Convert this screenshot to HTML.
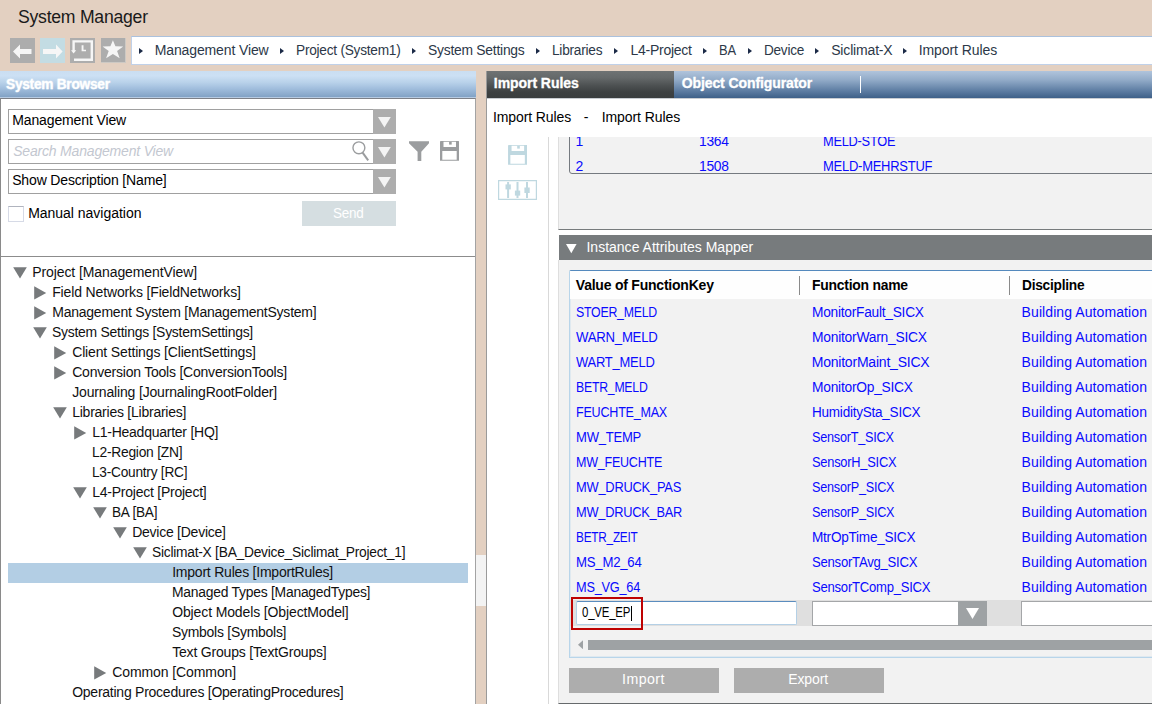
<!DOCTYPE html>
<html lang="en">
<head>
<meta charset="utf-8">
<title>System Manager</title>
<style>
html,body{margin:0;padding:0;background:#e3d0c1;}
body{width:1152px;height:704px;overflow:hidden;font-family:"Liberation Sans",sans-serif;}
#app{position:relative;width:1152px;height:704px;overflow:hidden;background:#e3d0c1;}
#app div,#app i,#app svg,#app span,#app .g{position:absolute;box-sizing:border-box;display:block;}
#app .g{left:0;top:0;width:0;height:0;margin:0;padding:0;list-style:none;}
.t{white-space:pre;line-height:20px;font-family:"Liberation Sans",sans-serif;}
.tb{top:38px;width:25px;height:25px;background:#adadad;}
.bc{left:131px;top:36px;width:1030px;height:29px;background:#fff;border:1px solid #c0d1e9;border-top-color:#abc1dd;}
.ar{top:10.6px;width:0;height:0;border-left:4.6px solid #1b2a47;border-top:3.8px solid transparent;border-bottom:3.8px solid transparent;}
.lh{left:0;top:71px;width:476px;height:27px;background:linear-gradient(#cadef2 0%,#cce0f4 18%,#b9d2ea 42%,#a1bedd 65%,#83a3c6 95%,#83a3c6 96.3%,#b7cbe2 96.4%,#b7cbe2 100%);}
.lp{left:0;top:98px;width:476px;height:606px;background:#fff;border-left:1px solid #8a8a8a;border-right:1px solid #a3a3a3;border-top:1px solid #7d8087;}
.cb{left:8px;width:388px;height:25px;background:#fff;border:1px solid #a0a0a0;}
.dd{right:-1px;top:-1px;width:23px;height:25px;background:#adadad;}
.chk{left:8px;top:206px;width:16px;height:16px;background:#fff;border:1px solid #d6dae6;border-top-color:#b0b4be;}
.send{left:302px;top:201px;width:94px;height:25px;background:#d5dee1;}
.sep{left:1px;top:256px;width:474px;height:1px;background:#8c8c8c;}
.sel{left:8px;top:563px;width:460px;height:20px;background:#b3cee4;}
.grip{left:476px;top:555px;width:10px;height:51px;background:#f3f3f3;}
.rp{left:486px;top:71px;width:670px;height:640px;background:#fff;border-left:1px solid #9a9a9a;}
.tab1{left:487px;top:71px;width:187px;height:27px;background:linear-gradient(#6f7374 0%,#65696a 25%,#4c5051 55%,#3d4142 78%,#3a3e3f 100%);}
.tab2{left:674px;top:71px;width:480px;height:27px;background:linear-gradient(#b0c4dc 0%,#92abc8 33%,#6483a8 68%,#3e6088 100%);}
.tabsep{left:860px;top:75.5px;width:1px;height:17px;background:#fff;}
.hline{left:487px;top:98px;width:670px;height:1px;background:#c9cdd2;}
.vline{left:548px;top:137px;width:1px;height:570px;background:#d9d9d9;}
.g1{left:558px;top:137px;width:600px;height:93px;background:#f2f2f2;border-left:1px solid #dedede;border-bottom:1px solid #777b7d;}
.upclip{left:558px;top:137px;width:600px;height:40px;overflow:hidden;}
.uptab{left:11px;top:-20px;width:600px;height:57px;border:1px solid #757a80;border-radius:0 0 0 3px;}
.sec{left:559px;top:235px;width:600px;height:25px;background:#777b7d;}
.g2{left:558px;top:260px;width:600px;height:444px;background:#f2f2f2;border-left:1px solid #dedede;border-bottom:1px solid #666a6c;}
.lv{left:569px;top:270px;width:600px;height:388px;border:1px solid #b8d5ea;border-top-color:#5489bd;background:#f2f2f2;border-radius:2px 0 0 0;box-shadow:inset 1px -1px 0 rgba(178,211,234,.3);}
.lvh{left:570px;top:271px;width:590px;height:28px;background:#fefefe;}
.csep{top:276px;width:1px;height:19px;background:#8a8a8a;}
.band{left:570px;top:600px;width:590px;height:26px;background:#dfdfdf;}
.in1{left:576px;top:601px;width:221px;height:24px;background:#fff;border:1px solid #b4d0e6;border-top-color:#5a8cbe;border-radius:2px;}
.cb2{left:812px;top:601px;width:175px;height:25px;background:#fff;border:1px solid #a4a6a8;}
.dd2{right:-1px;top:-1px;width:29px;height:25px;background:#9ea2a4;}
.in3{left:1021px;top:601px;width:140px;height:25px;background:#fff;border:1px solid #a4a6a8;}
.red{left:571px;top:597px;width:72px;height:33px;border:2px solid #be0202;}
.caret{left:631px;top:606px;width:1px;height:15px;background:#000;}
.thumb{left:588px;top:640px;width:570px;height:10px;background:#9ea2a4;}
.btn{top:668px;width:150px;height:25px;background:#adadad;}
</style>
</head>
<body>
<div id="app">
<header class="g">
<span class="t" id="t0" style="left:18.20px;top:6px;line-height:21px;font-size:18.3px;color:#1a1a1a;letter-spacing:-0.250px;transform:scaleX(0.9634);transform-origin:0 0;">System Manager</span>
<div class="tb" style="left:10px"><svg width="25" height="25" viewBox="0 0 25 25"><path d="M3 13.5L10 6.6V11H21.5V16H10V20.4Z" fill="#f6f6f6"/></svg></div>
<div class="tb" style="left:40px;background:#c3dce3"><svg width="25" height="25" viewBox="0 0 25 25"><path d="M22.6 13.5L16 6.6V11H3V16H16V20.4Z" fill="#f6f6f6"/></svg></div>
<div class="tb" style="left:70px"><svg width="25" height="25" viewBox="0 0 25 25"><g fill="none" stroke="#f6f6f6" stroke-width="2.4"><path d="M3.6 13V3.4H21.8V21.7H4"/></g><path d="M1 12.2H6.2L3.6 15.4Z" fill="#f6f6f6"/><path d="M11.6 7.2H13.5V11.8H16V13.3H11.6Z" fill="#f6f6f6"/></svg></div>
<div class="tb" style="left:101px;width:25px;height:25px;border-right:1px solid #cdc9c4;border-bottom:1px solid #cdc9c4"><svg width="24" height="24" viewBox="0 0 24 24"><path d="M11.9 2.2L14.4 8.3L22.2 8.5L16.1 13.1L18.7 20.2L11.9 16L5.1 20.2L7.7 13.1L1.6 8.5L9.4 8.3Z" fill="#f6f6f6"/></svg></div>
</header>
<nav class="g">
<div class="bc">
<i class="ar" style="left:6.50px"></i>
<i class="ar" style="left:147.75px"></i>
<i class="ar" style="left:280.00px"></i>
<i class="ar" style="left:403.50px"></i>
<i class="ar" style="left:481.75px"></i>
<i class="ar" style="left:571.00px"></i>
<i class="ar" style="left:615.50px"></i>
<i class="ar" style="left:683.00px"></i>
<i class="ar" style="left:771.00px"></i>
</div>
<span class="t" id="t1" style="left:154.70px;top:42px;line-height:16px;font-size:14px;color:#2c3848;letter-spacing:-0.122px;">Management View</span>
<span class="t" id="t2" style="left:295.95px;top:42px;line-height:16px;font-size:14px;color:#2c3848;letter-spacing:-0.250px;transform:scaleX(0.9767);transform-origin:0 0;">Project (System1)</span>
<span class="t" id="t3" style="left:427.95px;top:42px;line-height:16px;font-size:14px;color:#2c3848;letter-spacing:-0.250px;transform:scaleX(0.9907);transform-origin:0 0;">System Settings</span>
<span class="t" id="t4" style="left:552.20px;top:42px;line-height:16px;font-size:14px;color:#2c3848;letter-spacing:-0.250px;transform:scaleX(0.9767);transform-origin:0 0;">Libraries</span>
<span class="t" id="t5" style="left:630.45px;top:42px;line-height:16px;font-size:14px;color:#2c3848;letter-spacing:-0.250px;">L4-Project</span>
<span class="t" id="t6" style="left:719.20px;top:42px;line-height:16px;font-size:14px;color:#2c3848;letter-spacing:-0.250px;transform:scaleX(0.9220);transform-origin:0 0;">BA</span>
<span class="t" id="t7" style="left:763.70px;top:42px;line-height:16px;font-size:14px;color:#2c3848;letter-spacing:-0.250px;transform:scaleX(0.9688);transform-origin:0 0;">Device</span>
<span class="t" id="t8" style="left:831.20px;top:42px;line-height:16px;font-size:14px;color:#2c3848;letter-spacing:-0.168px;">Siclimat-X</span>
<span class="t" id="t9" style="left:918.70px;top:42px;line-height:16px;font-size:14px;color:#2c3848;letter-spacing:-0.078px;">Import Rules</span>
</nav>
<aside class="g">
<div class="lh"></div>
<div class="lp"></div>
<div class="cb" style="top:109px"><div class="dd"><svg style="left:4.8px;top:8.3px" width="13" height="11" viewBox="0 0 13 11"><path d="M0 0H12.8L6.4 10.6Z" fill="#f4f4f4"/></svg></div></div>
<div class="cb" style="top:139px"><div class="dd"><svg style="left:4.8px;top:8.3px" width="13" height="11" viewBox="0 0 13 11"><path d="M0 0H12.8L6.4 10.6Z" fill="#f4f4f4"/></svg></div><svg style="left:342px;top:1px" width="24" height="22" viewBox="0 0 24 22"><circle cx="7.9" cy="6.8" r="5.95" fill="none" stroke="#9b9d9f" stroke-width="1.4"/><path d="M11.6 11.6L17.2 19.4" stroke="#9b9d9f" stroke-width="2" fill="none"/></svg></div>
<div class="cb" style="top:169px"><div class="dd"><svg style="left:4.8px;top:8.3px" width="13" height="11" viewBox="0 0 13 11"><path d="M0 0H12.8L6.4 10.6Z" fill="#f4f4f4"/></svg></div></div>
<svg style="left:409.1px;top:141.2px" width="20" height="20" viewBox="0 0 20 20"><path d="M0 0.2H20V2.2L12.3 10.8V19.9H8.6V10.8L0 2.2Z" fill="#9b9d9f"/></svg>
<svg style="left:439.6px;top:141.2px" width="19.2" height="19.7" viewBox="0 0 19.2 19.7"><g fill="#9b9d9f"><path d="M0 0.8Q0 0 0.8 0H18.3Q19.2 0 19.2 0.8V19.7H0Z M3.5 0.8V6H16V0.8Z M2.3 10V18.7H16.7V10Z" fill-rule="evenodd"/><rect x="9.1" y="0.8" width="2.6" height="2.8"/></g></svg>
<div class="chk"></div>
<div class="send"></div>
<div class="sep"></div>
<span class="t" id="t10" style="left:5.70px;top:76px;line-height:16px;font-size:14px;color:#fff;font-weight:bold;letter-spacing:-0.250px;transform:scaleX(0.9768);transform-origin:0 0;-webkit-text-stroke:0.3px #fff;text-shadow:0 0 2px rgba(255,255,255,.5);">System Browser</span>
<span class="t" id="t11" style="left:12.20px;top:112px;line-height:16px;font-size:14px;color:#000;letter-spacing:-0.122px;">Management View</span>
<span class="t" id="t12" style="left:13.20px;top:143px;line-height:16px;font-size:14px;color:#c3c7d0;font-style:italic;letter-spacing:-0.188px;">Search Management View</span>
<span class="t" id="t13" style="left:12.20px;top:172px;line-height:16px;font-size:14px;color:#000;letter-spacing:-0.157px;">Show Description [Name]</span>
<span class="t" id="t14" style="left:28.20px;top:205px;line-height:16px;font-size:14px;color:#000;letter-spacing:-0.024px;">Manual navigation</span>
<span class="t" id="t15" style="left:332.95px;top:205px;line-height:16px;font-size:14px;color:#fff;letter-spacing:-0.250px;transform:scaleX(0.9623);transform-origin:0 0;">Send</span>
<div class="sel"></div>
<ul class="g">
<li class="g">
<svg class="tri" style="left:12.5px;top:267.0px" width="14" height="12" viewBox="0 0 14 12"><path d="M0.2 0.3H13.8L7 11.6Z" fill="#777a7c"/></svg>
<span class="t" id="t16" style="left:32.20px;top:264px;line-height:16px;font-size:14px;color:#111;letter-spacing:-0.090px;">Project [ManagementView]</span>
</li>
<li class="g">
<svg class="tri" style="left:34.0px;top:286.4px" width="13" height="14" viewBox="0 0 13 14"><path d="M0.2 0.2V13.6L12.2 6.9Z" fill="#777a7c"/></svg>
<span class="t" id="t17" style="left:52.20px;top:284px;line-height:16px;font-size:14px;color:#111;letter-spacing:-0.144px;">Field Networks [FieldNetworks]</span>
</li>
<li class="g">
<svg class="tri" style="left:34.0px;top:306.4px" width="13" height="14" viewBox="0 0 13 14"><path d="M0.2 0.2V13.6L12.2 6.9Z" fill="#777a7c"/></svg>
<span class="t" id="t18" style="left:52.20px;top:304px;line-height:16px;font-size:14px;color:#111;letter-spacing:-0.224px;">Management System [ManagementSystem]</span>
</li>
<li class="g">
<svg class="tri" style="left:32.5px;top:327.0px" width="14" height="12" viewBox="0 0 14 12"><path d="M0.2 0.3H13.8L7 11.6Z" fill="#777a7c"/></svg>
<span class="t" id="t19" style="left:52.20px;top:324px;line-height:16px;font-size:14px;color:#111;letter-spacing:-0.250px;transform:scaleX(0.9946);transform-origin:0 0;">System Settings [SystemSettings]</span>
</li>
<li class="g">
<svg class="tri" style="left:54.0px;top:346.4px" width="13" height="14" viewBox="0 0 13 14"><path d="M0.2 0.2V13.6L12.2 6.9Z" fill="#777a7c"/></svg>
<span class="t" id="t20" style="left:72.20px;top:344px;line-height:16px;font-size:14px;color:#111;letter-spacing:-0.148px;">Client Settings [ClientSettings]</span>
</li>
<li class="g">
<svg class="tri" style="left:54.0px;top:366.4px" width="13" height="14" viewBox="0 0 13 14"><path d="M0.2 0.2V13.6L12.2 6.9Z" fill="#777a7c"/></svg>
<span class="t" id="t21" style="left:72.20px;top:364px;line-height:16px;font-size:14px;color:#111;letter-spacing:-0.222px;">Conversion Tools [ConversionTools]</span>
</li>
<li class="g">
<span class="t" id="t22" style="left:72.20px;top:384px;line-height:16px;font-size:14px;color:#111;letter-spacing:-0.160px;">Journaling [JournalingRootFolder]</span>
</li>
<li class="g">
<svg class="tri" style="left:52.5px;top:407.0px" width="14" height="12" viewBox="0 0 14 12"><path d="M0.2 0.3H13.8L7 11.6Z" fill="#777a7c"/></svg>
<span class="t" id="t23" style="left:72.20px;top:404px;line-height:16px;font-size:14px;color:#111;letter-spacing:-0.241px;">Libraries [Libraries]</span>
</li>
<li class="g">
<svg class="tri" style="left:74.0px;top:426.4px" width="13" height="14" viewBox="0 0 13 14"><path d="M0.2 0.2V13.6L12.2 6.9Z" fill="#777a7c"/></svg>
<span class="t" id="t24" style="left:92.20px;top:424px;line-height:16px;font-size:14px;color:#111;letter-spacing:-0.250px;">L1-Headquarter [HQ]</span>
</li>
<li class="g">
<span class="t" id="t25" style="left:92.20px;top:444px;line-height:16px;font-size:14px;color:#111;letter-spacing:-0.250px;transform:scaleX(0.9870);transform-origin:0 0;">L2-Region [ZN]</span>
</li>
<li class="g">
<span class="t" id="t26" style="left:92.20px;top:464px;line-height:16px;font-size:14px;color:#111;letter-spacing:-0.250px;transform:scaleX(0.9779);transform-origin:0 0;">L3-Country [RC]</span>
</li>
<li class="g">
<svg class="tri" style="left:72.5px;top:487.0px" width="14" height="12" viewBox="0 0 14 12"><path d="M0.2 0.3H13.8L7 11.6Z" fill="#777a7c"/></svg>
<span class="t" id="t27" style="left:92.20px;top:484px;line-height:16px;font-size:14px;color:#111;letter-spacing:-0.240px;">L4-Project [Project]</span>
</li>
<li class="g">
<svg class="tri" style="left:92.5px;top:507.0px" width="14" height="12" viewBox="0 0 14 12"><path d="M0.2 0.3H13.8L7 11.6Z" fill="#777a7c"/></svg>
<span class="t" id="t28" style="left:112.20px;top:504px;line-height:16px;font-size:14px;color:#111;letter-spacing:-0.250px;transform:scaleX(0.9733);transform-origin:0 0;">BA [BA]</span>
</li>
<li class="g">
<svg class="tri" style="left:112.5px;top:527.0px" width="14" height="12" viewBox="0 0 14 12"><path d="M0.2 0.3H13.8L7 11.6Z" fill="#777a7c"/></svg>
<span class="t" id="t29" style="left:132.20px;top:524px;line-height:16px;font-size:14px;color:#111;letter-spacing:-0.250px;">Device [Device]</span>
</li>
<li class="g">
<svg class="tri" style="left:132.5px;top:547.0px" width="14" height="12" viewBox="0 0 14 12"><path d="M0.2 0.3H13.8L7 11.6Z" fill="#777a7c"/></svg>
<span class="t" id="t30" style="left:152.20px;top:544px;line-height:16px;font-size:14px;color:#111;letter-spacing:-0.250px;transform:scaleX(0.9839);transform-origin:0 0;">Siclimat-X [BA_Device_Siclimat_Project_1]</span>
</li>
<li class="g">
<span class="t" id="t31" style="left:172.20px;top:564px;line-height:16px;font-size:14px;color:#111;letter-spacing:-0.220px;">Import Rules [ImportRules]</span>
</li>
<li class="g">
<span class="t" id="t32" style="left:172.20px;top:584px;line-height:16px;font-size:14px;color:#111;letter-spacing:-0.250px;transform:scaleX(0.9923);transform-origin:0 0;">Managed Types [ManagedTypes]</span>
</li>
<li class="g">
<span class="t" id="t33" style="left:172.20px;top:604px;line-height:16px;font-size:14px;color:#111;letter-spacing:-0.125px;">Object Models [ObjectModel]</span>
</li>
<li class="g">
<span class="t" id="t34" style="left:172.20px;top:624px;line-height:16px;font-size:14px;color:#111;letter-spacing:-0.250px;transform:scaleX(0.9952);transform-origin:0 0;">Symbols [Symbols]</span>
</li>
<li class="g">
<span class="t" id="t35" style="left:172.20px;top:644px;line-height:16px;font-size:14px;color:#111;letter-spacing:-0.184px;">Text Groups [TextGroups]</span>
</li>
<li class="g">
<svg class="tri" style="left:94.0px;top:666.4px" width="13" height="14" viewBox="0 0 13 14"><path d="M0.2 0.2V13.6L12.2 6.9Z" fill="#777a7c"/></svg>
<span class="t" id="t36" style="left:112.20px;top:664px;line-height:16px;font-size:14px;color:#111;letter-spacing:-0.090px;">Common [Common]</span>
</li>
<li class="g">
<span class="t" id="t37" style="left:72.20px;top:684px;line-height:16px;font-size:14px;color:#111;letter-spacing:-0.250px;">Operating Procedures [OperatingProcedures]</span>
</li>
</ul>
</aside>
<div class="grip"></div>
<main class="g">
<div class="rp"></div>
<div class="tab1"></div>
<div class="tab2"></div>
<div class="tabsep"></div>
<div class="hline"></div>
<div class="vline"></div>
<svg style="left:507.8px;top:145px" width="19.4" height="19.8" viewBox="0 0 19.2 19.7"><g fill="#bfd8e0"><path d="M0 0.8Q0 0 0.8 0H18.3Q19.2 0 19.2 0.8V19.7H0Z M3.5 0.8V6H16V0.8Z M2.3 10V18.7H16.7V10Z" fill-rule="evenodd"/><rect x="9.1" y="0.8" width="2.6" height="2.8"/></g></svg>
<svg style="left:498px;top:180px" width="39" height="20" viewBox="0 0 39 20"><g fill="#bfd8e0"><path d="M0 0H39V20H0Z M1.2 1.2V18.8H37.8V1.2Z" fill-rule="evenodd"/><rect x="9.1" y="2" width="2" height="16"/><rect x="18.5" y="2" width="2" height="16"/><rect x="28" y="2" width="2" height="16"/><rect x="7.5" y="4.4" width="5.3" height="5"/><rect x="16.9" y="10.6" width="5.3" height="5"/><rect x="26.4" y="7.5" width="5.3" height="5.5"/></g></svg>
<div class="g1"></div>
<div class="sec"><svg style="left:6.5px;top:8.5px" width="11" height="10" viewBox="0 0 11 10"><path d="M0 0H10.6L5.3 9.3Z" fill="#fff"/></svg></div>
<div class="g2"></div>
<div class="lv"></div>
<div class="lvh"></div>
<div class="csep" style="left:799px"></div>
<div class="csep" style="left:1009px"></div>
<div class="band"></div>
<div class="in1"></div>
<div class="cb2"><div class="dd2"><svg style="left:8px;top:6.7px" width="13" height="11" viewBox="0 0 13 11"><path d="M0 0H13L6.5 11Z" fill="#fff"/></svg></div></div>
<div class="in3"></div>
<div class="red"></div>
<div class="caret"></div>
<svg style="left:578px;top:640.1px" width="5" height="9.4" viewBox="0 0 5 9"><path d="M5 0V9L0 4.5Z" fill="#9ea2a4"/></svg>
<div class="thumb"></div>
<div class="btn" style="left:569px"></div>
<div class="btn" style="left:734px"></div>
<span class="t" id="t38" style="left:493.80px;top:75px;line-height:16px;font-size:14px;color:#fff;font-weight:bold;letter-spacing:-0.053px;-webkit-text-stroke:0.3px #fff;">Import Rules</span>
<span class="t" id="t39" style="left:681.70px;top:75px;line-height:16px;font-size:14px;color:#fff;font-weight:bold;letter-spacing:-0.096px;-webkit-text-stroke:0.3px #fff;">Object Configurator</span>
<span class="t" id="t40" style="left:492.95px;top:109px;line-height:16px;font-size:14px;color:#000;letter-spacing:-0.101px;">Import Rules</span>
<span class="t" id="t41" style="left:583.70px;top:109px;line-height:16px;font-size:14px;color:#000;">-</span>
<span class="t" id="t42" style="left:601.70px;top:109px;line-height:16px;font-size:14px;color:#000;letter-spacing:-0.078px;">Import Rules</span>
<span class="t" id="t43" style="left:586.45px;top:239px;line-height:16px;font-size:14px;color:#fff;letter-spacing:0.008px;">Instance Attributes Mapper</span>
<span class="t" id="t44" style="left:575.80px;top:277px;line-height:16px;font-size:14px;color:#000;font-weight:bold;letter-spacing:-0.222px;">Value of FunctionKey</span>
<span class="t" id="t45" style="left:811.70px;top:277px;line-height:16px;font-size:14px;color:#000;font-weight:bold;letter-spacing:-0.250px;transform:scaleX(0.9942);transform-origin:0 0;">Function name</span>
<span class="t" id="t46" style="left:1021.60px;top:277px;line-height:16px;font-size:14px;color:#000;font-weight:bold;letter-spacing:-0.250px;transform:scaleX(0.9798);transform-origin:0 0;">Discipline</span>
<span class="t" id="t47" style="left:575.95px;top:304px;line-height:16px;font-size:14px;color:#0a0aff;letter-spacing:-0.250px;transform:scaleX(0.8791);transform-origin:0 0;">STOER_MELD</span>
<span class="t" id="t48" style="left:811.70px;top:304px;line-height:16px;font-size:14px;color:#0a0aff;letter-spacing:-0.250px;transform:scaleX(0.9800);transform-origin:0 0;">MonitorFault_SICX</span>
<span class="t" id="t49" style="left:1021.60px;top:304px;line-height:16px;font-size:14px;color:#0a0aff;letter-spacing:0.088px;">Building Automation</span>
<span class="t" id="t50" style="left:575.95px;top:329px;line-height:16px;font-size:14px;color:#0a0aff;letter-spacing:-0.250px;transform:scaleX(0.9403);transform-origin:0 0;">WARN_MELD</span>
<span class="t" id="t51" style="left:811.70px;top:329px;line-height:16px;font-size:14px;color:#0a0aff;letter-spacing:-0.250px;transform:scaleX(0.9886);transform-origin:0 0;">MonitorWarn_SICX</span>
<span class="t" id="t52" style="left:1021.60px;top:329px;line-height:16px;font-size:14px;color:#0a0aff;letter-spacing:0.088px;">Building Automation</span>
<span class="t" id="t53" style="left:575.95px;top:354px;line-height:16px;font-size:14px;color:#0a0aff;letter-spacing:-0.250px;transform:scaleX(0.9251);transform-origin:0 0;">WART_MELD</span>
<span class="t" id="t54" style="left:811.70px;top:354px;line-height:16px;font-size:14px;color:#0a0aff;letter-spacing:-0.212px;">MonitorMaint_SICX</span>
<span class="t" id="t55" style="left:1021.60px;top:354px;line-height:16px;font-size:14px;color:#0a0aff;letter-spacing:0.088px;">Building Automation</span>
<span class="t" id="t56" style="left:575.95px;top:379px;line-height:16px;font-size:14px;color:#0a0aff;letter-spacing:-0.250px;transform:scaleX(0.8747);transform-origin:0 0;">BETR_MELD</span>
<span class="t" id="t57" style="left:811.70px;top:379px;line-height:16px;font-size:14px;color:#0a0aff;letter-spacing:-0.250px;transform:scaleX(0.9846);transform-origin:0 0;">MonitorOp_SICX</span>
<span class="t" id="t58" style="left:1021.60px;top:379px;line-height:16px;font-size:14px;color:#0a0aff;letter-spacing:0.088px;">Building Automation</span>
<span class="t" id="t59" style="left:575.95px;top:404px;line-height:16px;font-size:14px;color:#0a0aff;letter-spacing:-0.250px;transform:scaleX(0.8969);transform-origin:0 0;">FEUCHTE_MAX</span>
<span class="t" id="t60" style="left:811.70px;top:404px;line-height:16px;font-size:14px;color:#0a0aff;letter-spacing:-0.250px;transform:scaleX(0.9671);transform-origin:0 0;">HumiditySta_SICX</span>
<span class="t" id="t61" style="left:1021.60px;top:404px;line-height:16px;font-size:14px;color:#0a0aff;letter-spacing:0.088px;">Building Automation</span>
<span class="t" id="t62" style="left:575.95px;top:429px;line-height:16px;font-size:14px;color:#0a0aff;letter-spacing:-0.250px;transform:scaleX(0.9313);transform-origin:0 0;">MW_TEMP</span>
<span class="t" id="t63" style="left:811.70px;top:429px;line-height:16px;font-size:14px;color:#0a0aff;letter-spacing:-0.250px;transform:scaleX(0.9048);transform-origin:0 0;">SensorT_SICX</span>
<span class="t" id="t64" style="left:1021.60px;top:429px;line-height:16px;font-size:14px;color:#0a0aff;letter-spacing:0.088px;">Building Automation</span>
<span class="t" id="t65" style="left:575.95px;top:454px;line-height:16px;font-size:14px;color:#0a0aff;letter-spacing:-0.250px;transform:scaleX(0.8935);transform-origin:0 0;">MW_FEUCHTE</span>
<span class="t" id="t66" style="left:811.70px;top:454px;line-height:16px;font-size:14px;color:#0a0aff;letter-spacing:-0.250px;transform:scaleX(0.9166);transform-origin:0 0;">SensorH_SICX</span>
<span class="t" id="t67" style="left:1021.60px;top:454px;line-height:16px;font-size:14px;color:#0a0aff;letter-spacing:0.088px;">Building Automation</span>
<span class="t" id="t68" style="left:575.95px;top:479px;line-height:16px;font-size:14px;color:#0a0aff;letter-spacing:-0.250px;transform:scaleX(0.9196);transform-origin:0 0;">MW_DRUCK_PAS</span>
<span class="t" id="t69" style="left:811.70px;top:479px;line-height:16px;font-size:14px;color:#0a0aff;letter-spacing:-0.250px;transform:scaleX(0.9024);transform-origin:0 0;">SensorP_SICX</span>
<span class="t" id="t70" style="left:1021.60px;top:479px;line-height:16px;font-size:14px;color:#0a0aff;letter-spacing:0.088px;">Building Automation</span>
<span class="t" id="t71" style="left:575.95px;top:504px;line-height:16px;font-size:14px;color:#0a0aff;letter-spacing:-0.250px;transform:scaleX(0.9139);transform-origin:0 0;">MW_DRUCK_BAR</span>
<span class="t" id="t72" style="left:811.70px;top:504px;line-height:16px;font-size:14px;color:#0a0aff;letter-spacing:-0.250px;transform:scaleX(0.9024);transform-origin:0 0;">SensorP_SICX</span>
<span class="t" id="t73" style="left:1021.60px;top:504px;line-height:16px;font-size:14px;color:#0a0aff;letter-spacing:0.088px;">Building Automation</span>
<span class="t" id="t74" style="left:575.95px;top:529px;line-height:16px;font-size:14px;color:#0a0aff;letter-spacing:-0.250px;transform:scaleX(0.8405);transform-origin:0 0;">BETR_ZEIT</span>
<span class="t" id="t75" style="left:811.70px;top:529px;line-height:16px;font-size:14px;color:#0a0aff;letter-spacing:-0.250px;transform:scaleX(0.9700);transform-origin:0 0;">MtrOpTime_SICX</span>
<span class="t" id="t76" style="left:1021.60px;top:529px;line-height:16px;font-size:14px;color:#0a0aff;letter-spacing:0.088px;">Building Automation</span>
<span class="t" id="t77" style="left:575.95px;top:554px;line-height:16px;font-size:14px;color:#0a0aff;letter-spacing:-0.250px;transform:scaleX(0.9414);transform-origin:0 0;">MS_M2_64</span>
<span class="t" id="t78" style="left:811.70px;top:554px;line-height:16px;font-size:14px;color:#0a0aff;letter-spacing:-0.250px;transform:scaleX(0.9360);transform-origin:0 0;">SensorTAvg_SICX</span>
<span class="t" id="t79" style="left:1021.60px;top:554px;line-height:16px;font-size:14px;color:#0a0aff;letter-spacing:0.088px;">Building Automation</span>
<span class="t" id="t80" style="left:575.95px;top:579px;line-height:16px;font-size:14px;color:#0a0aff;letter-spacing:-0.250px;transform:scaleX(0.9097);transform-origin:0 0;">MS_VG_64</span>
<span class="t" id="t81" style="left:811.70px;top:579px;line-height:16px;font-size:14px;color:#0a0aff;letter-spacing:-0.250px;transform:scaleX(0.9333);transform-origin:0 0;">SensorTComp_SICX</span>
<span class="t" id="t82" style="left:1021.60px;top:579px;line-height:16px;font-size:14px;color:#0a0aff;letter-spacing:0.088px;">Building Automation</span>
<span class="t" id="t83" style="left:581.80px;top:604px;line-height:16px;font-size:14px;color:#000;letter-spacing:-0.250px;transform:scaleX(0.8173);transform-origin:0 0;">0_VE_EP</span>
<span class="t" id="t84" style="left:621.90px;top:671px;line-height:16px;font-size:14px;color:#fff;letter-spacing:0.450px;transform:scaleX(1.0134);transform-origin:0 0;">Import</span>
<span class="t" id="t85" style="left:788.20px;top:671px;line-height:16px;font-size:14px;color:#fff;letter-spacing:-0.094px;">Export</span>
<div class="upclip"><div class="uptab"></div>
<span class="t" id="t86" style="left:17.50px;top:-4px;line-height:16px;font-size:14px;color:#0a0aff;">1</span>
<span class="t" id="t87" style="left:141.20px;top:-4px;line-height:16px;font-size:14px;color:#0a0aff;letter-spacing:-0.250px;transform:scaleX(0.9866);transform-origin:0 0;">1364</span>
<span class="t" id="t88" style="left:264.70px;top:-4px;line-height:16px;font-size:14px;color:#0a0aff;letter-spacing:-0.250px;transform:scaleX(0.9127);transform-origin:0 0;">MELD-STOE</span>
<span class="t" id="t89" style="left:17.50px;top:21px;line-height:16px;font-size:14px;color:#0a0aff;">2</span>
<span class="t" id="t90" style="left:141.20px;top:21px;line-height:16px;font-size:14px;color:#0a0aff;letter-spacing:-0.250px;transform:scaleX(0.9866);transform-origin:0 0;">1508</span>
<span class="t" id="t91" style="left:264.70px;top:21px;line-height:16px;font-size:14px;color:#0a0aff;letter-spacing:-0.250px;transform:scaleX(0.9253);transform-origin:0 0;">MELD-MEHRSTUF</span>
</div>
</main>
</div>
</body>
</html>
